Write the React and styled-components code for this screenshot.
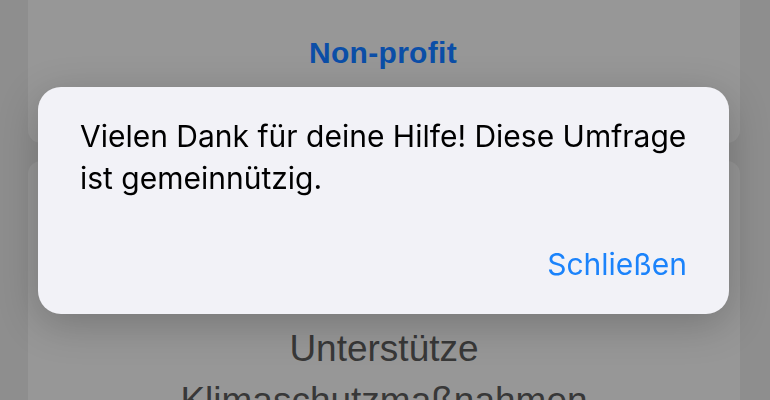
import React from "react";
import styled, { createGlobalStyle } from "styled-components";

const Global = createGlobalStyle`
  html, body { margin: 0; padding: 0; }
  body {
    width: 770px;
    height: 400px;
    overflow: hidden;
    background: #8e8e8e;
    font-family: "Liberation Sans", Arial, sans-serif;
  }
`;

const Page = styled.div`
  display: flex;
  flex-direction: column;
  gap: 18px;
  padding: 0 30px 0 28px;
  height: 400px;
  overflow: hidden;
`;

const Card = styled.section`
  background: #979797;
  border-radius: ${(p) => (p.$top ? "0 0 13px 13px" : "13px 13px 0 0")};
  display: flex;
  flex-direction: column;
  align-items: center;
  padding: ${(p) => p.$pad};
  flex-shrink: 0;
`;

const Label = styled.div`
  font-family: "Liberation Sans", Arial, sans-serif;
  font-weight: 700;
  font-size: 30px;
  letter-spacing: 0.3px;
  line-height: 33px;
  color: #0b4ea7;
  transform: translateX(-1px);
`;

const Heading = styled.div`
  font-family: "Liberation Sans", Arial, sans-serif;
  font-size: 37px;
  line-height: 52px;
  color: #383838;
  text-align: center;
`;

const Overlay = styled.div`
  position: fixed;
  inset: 0;
  display: flex;
  align-items: center;
  justify-content: center;
  padding-right: 3px;
`;

const Alert = styled.div`
  width: 691px;
  box-sizing: border-box;
  background: #f2f2f7;
  border-radius: 23px;
  padding: 28px 42px 29px 42px;
  box-shadow: 0 10px 40px rgba(0, 0, 0, 0.22);
  display: flex;
  flex-direction: column;
  gap: 44px;
  font-family: Inter, "Noto Sans", sans-serif;
`;

const Message = styled.p`
  margin: 0;
  font-size: 30px;
  line-height: 42px;
  color: #000;
  max-width: 625px;
`;

const Actions = styled.div`
  display: flex;
  justify-content: flex-end;
`;

const ActionButton = styled.button`
  border: 0;
  background: none;
  padding: 0;
  font-family: inherit;
  font-size: 30px;
  line-height: 42px;
  color: #1b83fb;
  cursor: pointer;
`;

export default function App() {
  return (
    <>
      <Global />
      <Page>
        <Card $top $pad="36px 0 74px">
          <Label>Non-profit</Label>
        </Card>
        <Card $pad="162px 0 40px">
          <Heading>
            Unterstütze
            <br />
            Klimaschutzmaßnahmen
          </Heading>
        </Card>
      </Page>
      <Overlay>
        <Alert role="alertdialog">
          <Message>Vielen Dank für deine Hilfe! Diese Umfrage ist gemeinnützig.</Message>
          <Actions>
            <ActionButton>Schließen</ActionButton>
          </Actions>
        </Alert>
      </Overlay>
    </>
  );
}
